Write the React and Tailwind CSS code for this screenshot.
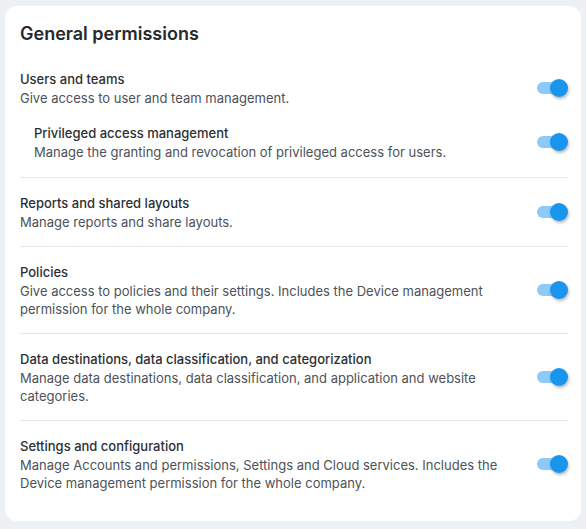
import React from "react";

const sections = [
  {
    title: "Users and teams",
    desc: "Give access to user and team management.",
    child: {
      title: "Privileged access management",
      desc: "Manage the granting and revocation of privileged access for users.",
    },
  },
  { title: "Reports and shared layouts", desc: "Manage reports and share layouts." },
  {
    title: "Policies",
    desc: "Give access to policies and their settings. Includes the Device management permission for the whole company.",
  },
  {
    title: "Data destinations, data classification, and categorization",
    desc: "Manage data destinations, data classification, and application and website categories.",
  },
  {
    title: "Settings and configuration",
    desc: "Manage Accounts and permissions, Settings and Cloud services. Includes the Device management permission for the whole company.",
  },
];

function Switch() {
  return (
    <div className="relative w-[31px] h-[18px] shrink-0">
      <div className="absolute left-0 right-[4px] top-[3px] h-[12px] rounded-full bg-[#8dcaf8]" />
      <div className="absolute right-0 top-0 w-[18px] h-[18px] rounded-full bg-[#1a95ee] shadow-[1px_2px_3px_rgba(0,0,0,0.28)]" />
    </div>
  );
}

function Row({ title, desc, indent }) {
  return (
    <div className={`flex items-center gap-6 ${indent ? "pl-[14px]" : ""}`}>
      <div className="flex-1 min-w-0">
        <div className="text-[13px] leading-[20px] font-medium text-[#2b2f33]">{title}</div>
        <div className="text-[13px] leading-[18px] text-[#4d5258]">{desc}</div>
      </div>
      <Switch />
    </div>
  );
}

export default function App() {
  return (
    <div
      className="min-h-[529px] w-full bg-[#eef1f4] pt-[6px] pb-[7px] px-[5px]"
      style={{ fontFamily: "Inter, 'Noto Sans', sans-serif" }}
    >
      <div className="bg-white rounded-[12px] pl-[15px] pr-[13px] pt-[14px] pb-[14px]">
        <h1 className="text-[18px] leading-[28px] font-semibold text-[#25292d]">General permissions</h1>
        <div className="mt-[6px] flex flex-col">
          {sections.map((s, i) => (
            <div
              key={i}
              className={`pt-[15px] ${i === 0 ? "pb-4" : "pb-[15px]"} ${i < sections.length - 1 ? "border-b border-[#e6e8ea]" : ""}`}
            >
              <Row title={s.title} desc={s.desc} />
              {s.child && (
                <div className="mt-4">
                  <Row title={s.child.title} desc={s.child.desc} indent />
                </div>
              )}
            </div>
          ))}
        </div>
      </div>
    </div>
  );
}
